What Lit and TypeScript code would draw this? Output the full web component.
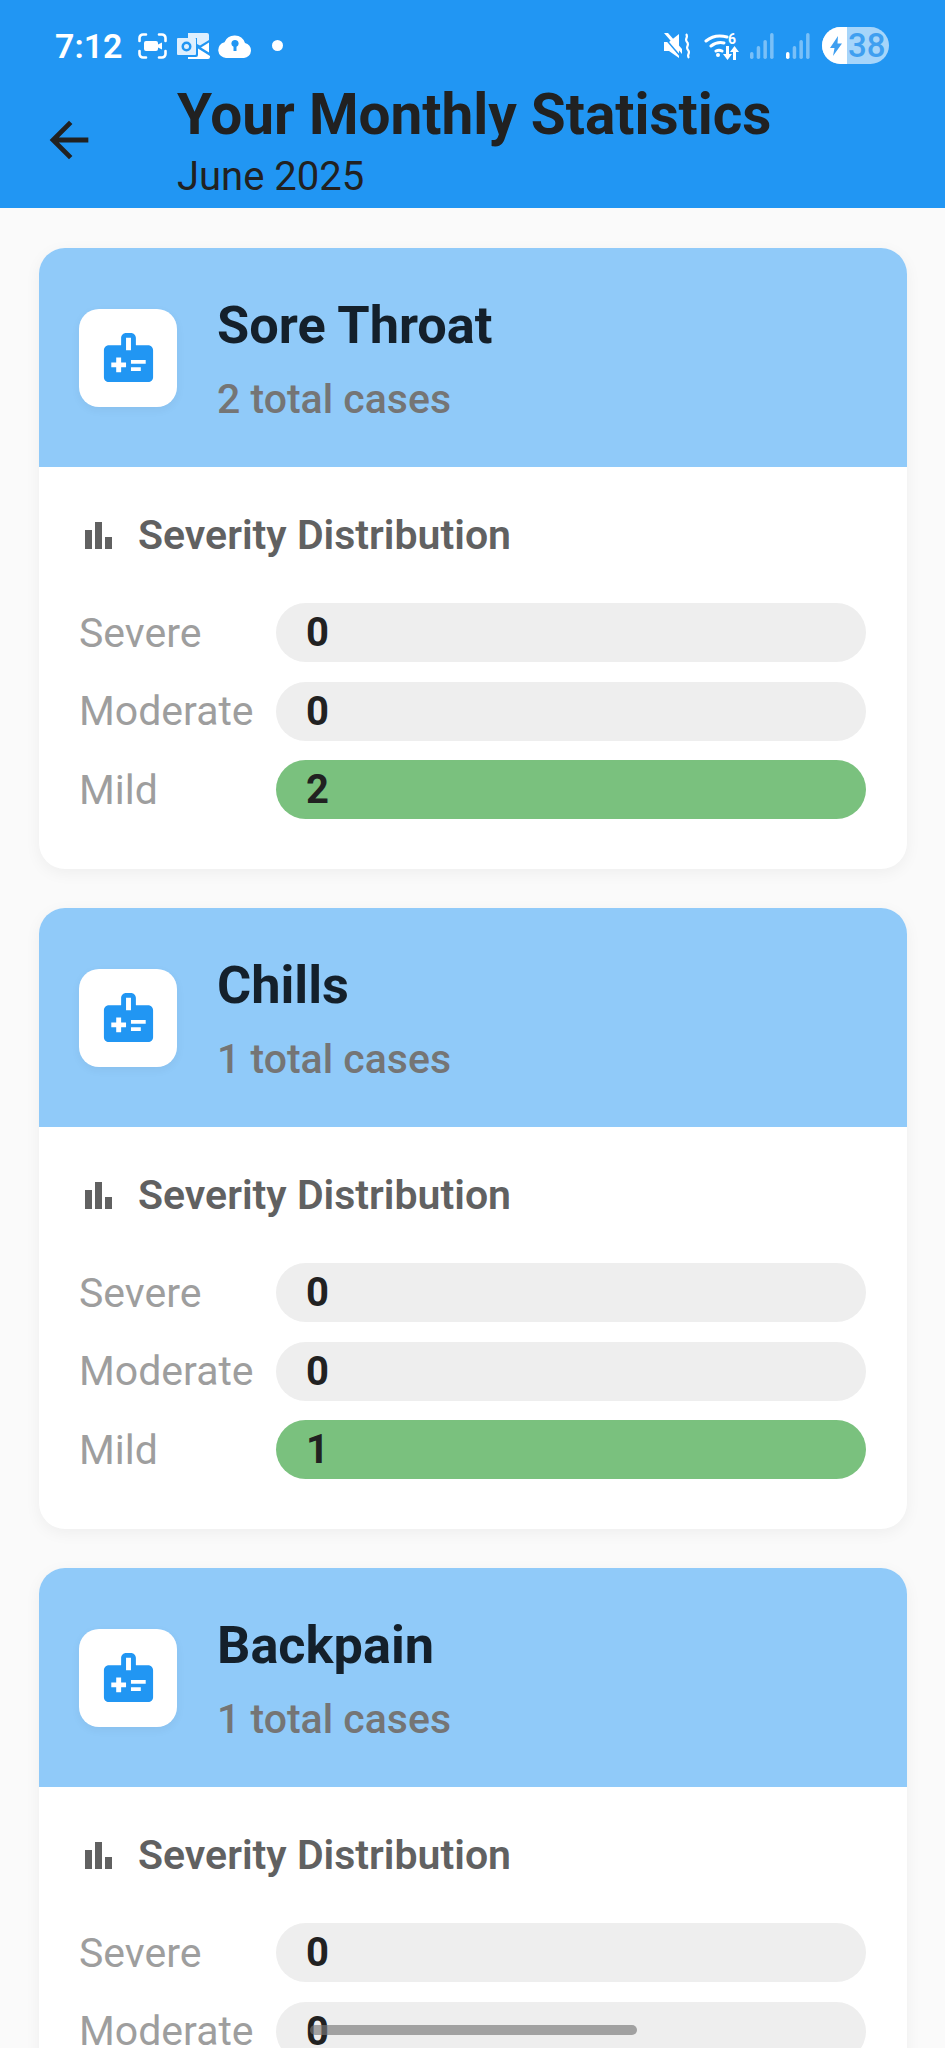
import { css, html, LitElement, svg } from "lit";
import { customElement } from "lit/decorators.js";

interface Row {
  label: string;
  value: number;
  filled?: boolean;
}

interface Symptom {
  name: string;
  total: number;
  rows: Row[];
}

const SYMPTOMS: Symptom[] = [
  {
    name: "Sore Throat",
    total: 2,
    rows: [
      { label: "Severe", value: 0 },
      { label: "Moderate", value: 0 },
      { label: "Mild", value: 2, filled: true },
    ],
  },
  {
    name: "Chills",
    total: 1,
    rows: [
      { label: "Severe", value: 0 },
      { label: "Moderate", value: 0 },
      { label: "Mild", value: 1, filled: true },
    ],
  },
  {
    name: "Backpain",
    total: 1,
    rows: [
      { label: "Severe", value: 0 },
      { label: "Moderate", value: 0 },
      { label: "Mild", value: 1, filled: true },
    ],
  },
];

const medicalIcon = svg`<path fill-rule="evenodd" d="M20 7h-5V4c0-1.100-.9-2-2-2h-2C9.900 2 9 2.900 9 4v3H4C2.900 7 2 7.900 2 9v11c0 1.100.9 2 2 2h16c1.100 0 2-.9 2-2V9c0-1.100-.9-2-2-2zM11 4h2v5h-2V4zm0 12H9v2H7v-2H5v-2h2v-2h2v2h2v2zm2-1.500V13h6v1.500h-6zm0 3V16h4v1.500h-4z"/>`;

@customElement("app-root")
export class AppRoot extends LitElement {
  static styles = css`
    :host {
      display: block;
      position: relative;
      height: 2048px;
      overflow: hidden;
      background: #fafafa;
      font-family: Roboto, "Liberation Sans", sans-serif;
      color: #212121;
    }

    .appbar {
      height: 208px;
      background: #2196f3;
      display: flex;
      flex-direction: column;
    }

    .status {
      height: 82px;
      flex: none;
      display: flex;
      align-items: center;
      padding: 9px 56px 0 55px;
      box-sizing: border-box;
      color: #fff;
    }

    .time {
      font-size: 34px;
      font-weight: 600;
      width: 83px;
    }

    .status svg {
      display: block;
      fill: currentColor;
    }

    .status-left,
    .status-right {
      display: flex;
      align-items: center;
    }

    .status-right {
      margin-left: auto;
    }

    .battery {
      position: relative;
      width: 67px;
      height: 37px;
      border-radius: 19px;
      margin-left: 12px;
      background: rgba(255, 255, 255, 0.6);
      overflow: hidden;
      color: #3f9ff0;
      font-size: 33px;
      font-weight: 500;
      line-height: 38px;
      text-indent: 26px;
    }

    .battery-fill {
      position: absolute;
      left: 0;
      top: 0;
      width: 25px;
      height: 37px;
      background: #fff;
      display: flex;
      align-items: center;
      padding-left: 8px;
      box-sizing: border-box;
    }

    .status .battery-fill svg {
      fill: #3f9ff0;
    }

    .toolbar {
      display: flex;
      padding-left: 40px;
    }

    .back {
      width: 58px;
      height: 58px;
      margin-top: 29px;
      fill: #212121;
      flex: none;
    }

    .heading {
      margin-left: 79px;
      padding-top: 1px;
    }

    .heading h1 {
      margin: 0;
      font-size: 56.7px;
      line-height: 64px;
      font-weight: 700;
    }

    .heading p {
      margin: 7px 0 0;
      font-size: 40px;
      line-height: 46px;
    }

    .list {
      padding: 40px 38px 0 39px;
      display: flex;
      flex-direction: column;
      gap: 39px;
    }

    .card {
      background: #fff;
      border-radius: 26px;
      overflow: hidden;
      box-shadow: 0 4px 16px rgba(0, 0, 0, 0.05);
      flex: none;
    }

    .card-head {
      height: 219px;
      background: #90caf9;
      display: flex;
      align-items: center;
      padding-left: 40px;
    }

    .tile {
      width: 98px;
      height: 98px;
      border-radius: 20px;
      background: #fff;
      box-shadow: 0 3px 10px rgba(0, 0, 0, 0.05);
      display: flex;
      align-items: center;
      justify-content: center;
      flex: none;
    }

    .tile svg {
      width: 59px;
      height: 59px;
      fill: #2196f3;
    }

    .names {
      margin-left: 40px;
      padding-top: 4px;
    }

    .names h2 {
      margin: 0;
      font-size: 52.3px;
      line-height: 56px;
      font-weight: 700;
      color: #14202b;
    }

    .names p {
      margin: 23px 0 0;
      font-size: 41px;
      line-height: 46px;
      font-weight: 500;
      color: #757575;
    }

    .card-body {
      padding: 45px 41px 50px;
    }

    .section {
      display: flex;
      align-items: center;
      height: 46px;
      margin-bottom: 45px;
      font-size: 41px;
      font-weight: 600;
      color: #616161;
    }

    .section svg {
      width: 27px;
      height: 27px;
      margin: 0 26px 0 5px;
      fill: #616161;
    }

    .rows {
      display: flex;
      flex-direction: column;
      gap: 19.5px;
    }

    .row {
      display: flex;
      align-items: center;
    }

    .row-label {
      width: 197px;
      margin-left: -1px;
      font-size: 41px;
      color: #9e9e9e;
      flex: none;
    }

    .bar {
      flex: 1;
      height: 59px;
      border-radius: 30px;
      background: #eeeeee;
      padding-left: 30px;
      font-size: 40px;
      line-height: 59px;
      font-weight: 700;
      color: #212121;
    }

    .bar.filled {
      background: #7ac17e;
    }

    .home-bar {
      position: absolute;
      left: 310px;
      top: 2025px;
      width: 327px;
      height: 10px;
      border-radius: 5px;
      background: rgba(120, 120, 120, 0.65);
    }
  `;

  private renderStatus() {
    return html`<div class="status">
      <div class="status-left">
        <div class="time">7:12</div>
        <svg width="29" height="26" viewBox="0 0 29 26" style="margin-right:10px">
          <path fill="none" stroke="currentColor" stroke-width="2.600" stroke-linecap="round" d="M1.500 8V5a3.500 3.500 0 0 1 3.500-3.500h3M27.500 8V5A3.500 3.500 0 0 0 24 1.500h-3M1.500 18v3A3.500 3.500 0 0 0 5 24.500h3M27.500 18v3a3.500 3.500 0 0 1-3.500 3.500h-3" />
          <path d="M8 8h10a2 2 0 0 1 2 2v1.500l4-2v7l-4-2V16a2 2 0 0 1-2 2H8a2 2 0 0 1-2-2v-6a2 2 0 0 1 2-2z" />
        </svg>
        <svg width="33" height="26" viewBox="0 0 33 26" style="margin-right:8px">
          <path opacity=".85" d="M11 0h19a2 2 0 0 1 2 2v5l-9 5.500L20 11V5H11z" />
          <path opacity=".85" fill-rule="evenodd" d="M1 5h17a1 1 0 0 1 1 1v15a1 1 0 0 1-1 1H1a1 1 0 0 1-1-1V6a1 1 0 0 1 1-1zm8.500 3.500a5 5 0 1 0 0 10 5 5 0 0 0 0-10zm0 2.500a2.500 2.500 0 1 1 0 5 2.500 2.500 0 0 1 0-5z" />
          <path d="M32 9.500v10l-8-5zM21 15.500l2 1.200L33 23v1a2 2 0 0 1-2 2H11v-2h8a2 2 0 0 0 2-2z" />
        </svg>
        <svg width="34" height="24" viewBox="0 0 34 24">
          <path fill-rule="evenodd" d="M8 24a8 8 0 0 1-1.500-15.800A11 11 0 0 1 27 9a7.600 7.600 0 0 1-1 15zM17 6a3.500 3.500 0 0 0-1.500 6.700V17h3v-4.300A3.500 3.500 0 0 0 17 6z" />
        </svg>
        <svg width="11" height="11" viewBox="0 0 11 11" style="margin-left:20px">
          <circle cx="5.500" cy="5.500" r="5.500" />
        </svg>
      </div>
      <div class="status-right">
        <svg width="26" height="26" viewBox="0 0 26 26">
          <path d="M0 9h5L15 1v24L5 18H0z" />
          <path fill="none" stroke="#2196f3" stroke-width="1.500" d="M-1 3l18 21" />
          <path d="M0 0h4l14 16v5z" />
          <path fill="none" stroke="currentColor" stroke-width="2.200" d="M22 1c3 3-2 5 1 8s-2 5 1 8-2 5 1 8" />
        </svg>
        <svg width="38" height="28" viewBox="0 0 38 28" style="margin-left:14px">
          <path fill="none" stroke="currentColor" stroke-width="3" stroke-linecap="round" d="M2 9c6-5 14-6 21-4M7 14c4-3 9-4 13-3M12 19c2-1 4-1 6 0" />
          <circle cx="14" cy="23" r="2" />
          <text x="24" y="12" font-size="14" font-weight="700" font-family="Roboto">6</text>
          <path d="M22 14h3v8h3l-4.500 6-4.500-6h3zM32 28h-3v-8h-3l4.500-6 4.500 6h-3z" />
        </svg>
        <svg width="24" height="26" viewBox="0 0 24 26" style="margin-left:8px" opacity=".4">
          <rect x="0" y="19" width="3.500" height="7" rx="1.700" />
          <rect x="6.700" y="13" width="3.500" height="13" rx="1.700" />
          <rect x="13.400" y="7" width="3.500" height="19" rx="1.700" />
          <rect x="20.100" y="0" width="3.500" height="26" rx="1.700" />
        </svg>
        <svg width="24" height="26" viewBox="0 0 24 26" style="margin-left:12px">
          <rect x="0" y="19" width="3.500" height="7" rx="1.700" />
          <rect x="6.700" y="13" width="3.500" height="13" rx="1.700" opacity=".4" />
          <rect x="13.400" y="7" width="3.500" height="19" rx="1.700" opacity=".4" />
          <rect x="20.100" y="0" width="3.500" height="26" rx="1.700" opacity=".4" />
        </svg>
        <div class="battery">
          38
          <div class="battery-fill">
            <svg width="12" height="20" viewBox="0 0 12 20">
              <path d="M8 0L0 12h4.500L3 20l9-12.500H7.500z" />
            </svg>
          </div>
        </div>
      </div>
    </div>`;
  }

  private renderCard(item: Symptom) {
    return html`<section class="card">
      <div class="card-head">
        <div class="tile">
          <svg viewBox="0 0 24 24">${medicalIcon}</svg>
        </div>
        <div class="names">
          <h2>${item.name}</h2>
          <p>${item.total} total cases</p>
        </div>
      </div>
      <div class="card-body">
        <div class="section">
          <svg viewBox="0 0 27 27">
            <path d="M0 8h7v19H0zM10 0h7v27h-7zM20 15h7v12h-7z" />
          </svg>
          Severity Distribution
        </div>
        <div class="rows">
          ${item.rows.map(
            (row) => html`<div class="row">
              <div class="row-label">${row.label}</div>
              <div class="bar ${row.filled ? "filled" : ""}">${row.value}</div>
            </div>`,
          )}
        </div>
      </div>
    </section>`;
  }

  protected render() {
    return html`<header class="appbar">
        ${this.renderStatus()}
        <div class="toolbar">
          <svg class="back" viewBox="0 0 24 24">
            <path d="M20 11H7.830l5.590-5.590L12 4l-8 8 8 8 1.410-1.410L7.830 13H20v-2z" />
          </svg>
          <div class="heading">
            <h1>Your Monthly Statistics</h1>
            <p>June 2025</p>
          </div>
        </div>
      </header>
      <main class="list">${SYMPTOMS.map((item) => this.renderCard(item))}</main>
      <div class="home-bar"></div>`;
  }
}
